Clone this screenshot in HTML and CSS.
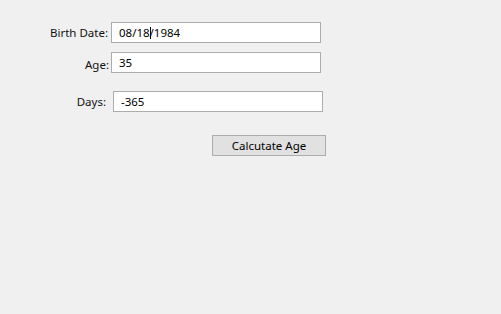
FILE: index.html
```html
<!doctype html>
<html lang="en">
  <head>
    <meta charset="UTF-8" />
    <meta name="viewport" content="width=device-width, initial-scale=1.0" />
    <title>Age Calculator</title>
    <link rel="stylesheet" href="styles.css">
  </head>
  <body>
    <div class="form">
      <div class="row row-birth">
        <label class="label">Birth Date:</label>
        <div class="textbox">08/18<span class="caret"></span>/1984</div>
      </div>

      <div class="row row-age">
        <label class="label">Age:</label>
        <div class="textbox">35</div>
      </div>

      <div class="row row-days">
        <label class="label">Days:</label>
        <div class="textbox">-365</div>
      </div>

      <button class="calc-btn">Calcutate Age</button>
    </div>
  </body>
</html>
```

FILE: styles.css
```css
* {
  margin: 0;
  padding: 0;
  box-sizing: border-box;
}

body {
  font-family: 'Segoe UI', 'Noto Sans', 'Open Sans', sans-serif;
  font-size: 11.5px;
  background: #f0f0f0;
  color: #000;
  width: 501px;
  height: 314px;
  overflow: hidden;
}

.form {
  padding-top: 22px;
}

.row {
  display: flex;
  align-items: center;
  height: 21px;
}

.label {
  text-align: right;
  white-space: nowrap;
  color: #111;
}

.textbox {
  width: 210px;
  height: 21px;
  background: #fff;
  border: 1px solid #acacac;
  padding-left: 7px;
  line-height: 20px;
  white-space: nowrap;
}

.caret {
  display: inline-block;
  width: 1px;
  height: 12px;
  background: #000;
  margin-right: -1px;
  vertical-align: -2px;
}

.row-birth .label {
  width: 108px;
  margin-right: 3px;
}

.row-age {
  margin-top: 9px;
}

.row-age .label {
  width: 109px;
  margin-right: 2px;
  padding-top: 3px;
}

.row-days {
  margin-top: 18px;
}

.row-days .label {
  width: 106px;
  margin-right: 7px;
}

.calc-btn {
  display: block;
  margin: 23px 0 0 212px;
  width: 114px;
  height: 21px;
  background: #e1e1e1;
  border: 1px solid #adadad;
  font-family: inherit;
  font-size: 11.5px;
  color: #000;
  line-height: 17px;
}
```
